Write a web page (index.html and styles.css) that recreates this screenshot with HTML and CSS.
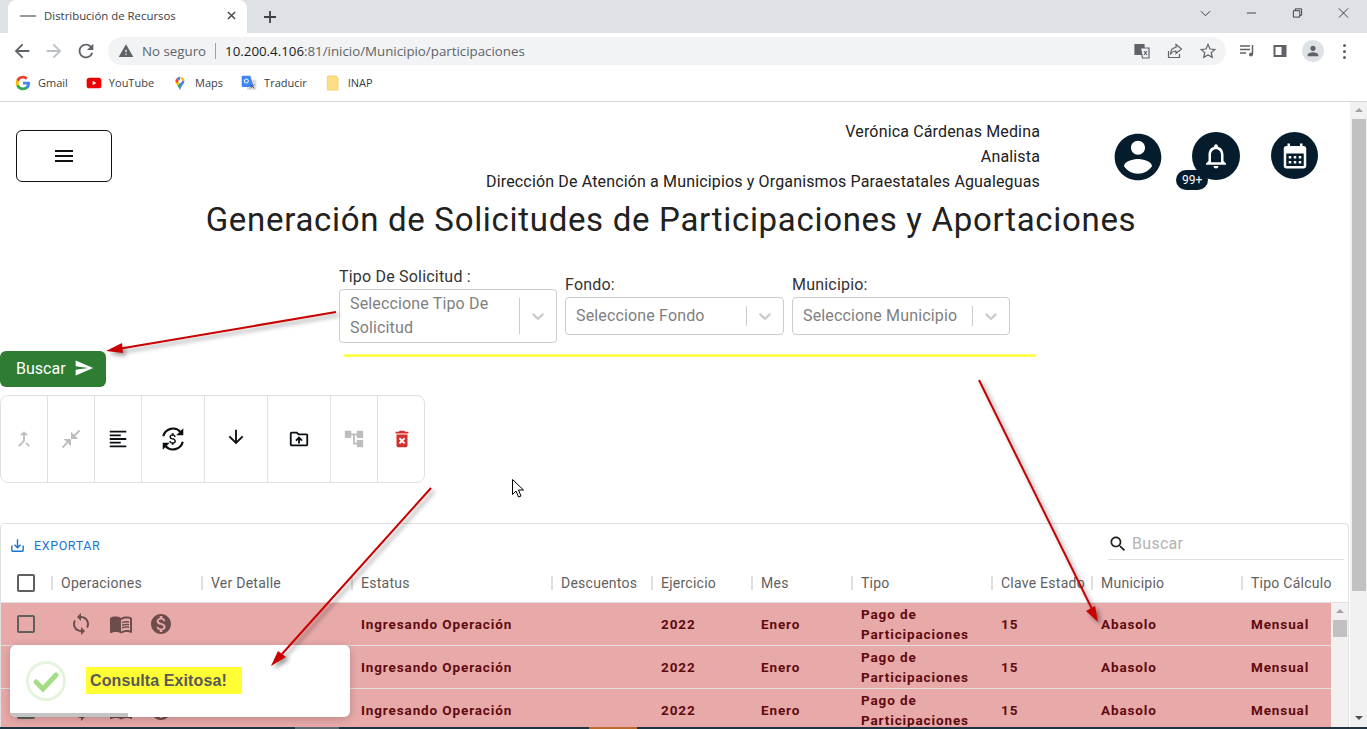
FILE: index.html
```html
<!DOCTYPE html>
<html lang="es">
<head>
    <meta charset="UTF-8">
    <title>Distribución de Recursos</title>
    <link rel="stylesheet" href="styles.css">
</head>
<body>
    <svg class="sprite" width="0" height="0">
        <symbol id="i-check" viewBox="0 0 24 24"><path d="M19 5v14H5V5h14m0-2H5c-1.1 0-2 .9-2 2v14c0 1.1.9 2 2 2h14c1.1 0 2-.9 2-2V5c0-1.1-.9-2-2-2z"/></symbol>
        <symbol id="i-sync" viewBox="0 0 24 24"><path d="M12 4V1L8 5l4 4V6c3.31 0 6 2.69 6 6 0 1.01-.25 1.97-.7 2.8l1.46 1.46C19.54 15.03 20 13.57 20 12c0-4.42-3.58-8-8-8zm0 14c-3.31 0-6-2.69-6-6 0-1.01.25-1.97.7-2.8L5.24 7.74C4.46 8.97 4 10.43 4 12c0 4.42 3.58 8 8 8v3l4-4-4-4v3z"/></symbol>
        <symbol id="i-book" viewBox="0 0 24 24"><path d="M21 5c-1.11-.35-2.33-.5-3.5-.5-1.95 0-4.05.4-5.5 1.5-1.45-1.1-3.55-1.5-5.5-1.5S2.45 4.9 1 6v14.65c0 .25.25.5.5.5.1 0 .15-.05.25-.05C3.1 20.45 5.05 20 6.5 20c1.95 0 4.05.4 5.5 1.5 1.35-.85 3.8-1.5 5.5-1.5 1.65 0 3.35.3 4.75 1.05.1.05.15.05.25.05.25 0 .5-.25.5-.5V6c-.6-.45-1.25-.75-2-1zm0 13.5c-1.1-.35-2.3-.5-3.5-.5-1.7 0-4.15.65-5.5 1.5V8c1.35-.85 3.8-1.5 5.5-1.5 1.2 0 2.4.15 3.5.5v11.5z"/><path d="M17.5 10.5c.88 0 1.73.09 2.5.26V9.24c-.79-.15-1.64-.24-2.5-.24-1.7 0-3.24.29-4.5.83v1.66c1.13-.64 2.7-.99 4.5-.99zM13 12.49v1.66c1.13-.64 2.7-.99 4.5-.99.88 0 1.73.09 2.5.26V11.9c-.79-.15-1.64-.24-2.5-.24-1.7 0-3.24.3-4.5.83zM17.5 14.33c-1.7 0-3.24.29-4.5.83v1.66c1.13-.64 2.7-.99 4.5-.99.88 0 1.73.09 2.5.26v-1.52c-.79-.16-1.64-.24-2.5-.24z"/></symbol>
        <symbol id="i-money" viewBox="0 0 24 24"><path d="M12 2C6.48 2 2 6.48 2 12s4.48 10 10 10 10-4.48 10-10S17.52 2 12 2zm1.41 16.09V20h-2.67v-1.93c-1.71-.36-3.16-1.46-3.27-3.4h1.96c.1 1.05.82 1.87 2.65 1.87 1.96 0 2.4-.98 2.4-1.59 0-.83-.44-1.61-2.67-2.14-2.48-.6-4.18-1.62-4.18-3.67 0-1.72 1.39-2.84 3.11-3.21V4h2.67v1.95c1.86.45 2.79 1.86 2.85 3.39H14.3c-.05-1.11-.64-1.87-2.22-1.87-1.5 0-2.4.68-2.4 1.64 0 .84.65 1.39 2.67 1.91s4.18 1.39 4.18 3.91c-.01 1.83-1.38 2.83-3.12 3.16z"/></symbol>
    </svg>

    <!-- ventana del navegador -->
    <div class="tabstrip">
        <div class="tab">
            <span class="tab-favicon"></span>
            <span class="tab-title">Distribución de Recursos</span>
            <svg class="tab-close" viewBox="0 0 10 10"><path d="M1 1l8 8M9 1l-8 8"/></svg>
        </div>
        <svg class="tab-new" viewBox="0 0 12 12"><path d="M6 0v12M0 6h12"/></svg>
        <div class="win-controls">
            <svg viewBox="0 0 12 12"><path d="M1 4l5 5 5-5"/></svg>
            <svg viewBox="0 0 12 12"><path d="M1 6h10"/></svg>
            <svg viewBox="0 0 12 12"><path d="M1.5 3.5h7v7h-7zM3.5 3.5v-2h7v7h-2"/></svg>
            <svg viewBox="0 0 12 12"><path d="M1 1l10 10M11 1L1 11"/></svg>
        </div>
    </div>

    <div class="navbar">
        <svg class="nav-icon" viewBox="0 0 24 24"><path d="M20 11H7.83l5.59-5.59L12 4l-8 8 8 8 1.41-1.41L7.83 13H20v-2z"/></svg>
        <svg class="nav-icon is-off" viewBox="0 0 24 24"><path d="M12 4l-1.41 1.41L16.17 11H4v2h12.17l-5.58 5.59L12 20l8-8z"/></svg>
        <svg class="nav-icon" viewBox="0 0 24 24"><path d="M17.65 6.35C16.2 4.9 14.21 4 12 4c-4.42 0-7.99 3.58-7.99 8s3.57 8 7.99 8c3.73 0 6.84-2.55 7.73-6h-2.08c-.82 2.33-3.04 4-5.65 4-3.31 0-6-2.69-6-6s2.69-6 6-6c1.66 0 3.14.69 4.22 1.78L13 11h7V4l-2.35 2.35z"/></svg>
        <div class="omnibox">
            <svg class="omni-warn" viewBox="0 0 24 24"><path d="M1 21h22L12 2 1 21zm12-3h-2v-2h2v2zm0-4h-2v-4h2v4z"/></svg>
            <span class="omni-status">No seguro</span>
            <span class="omni-url"><b>10.200.4.106</b>:81/inicio/Municipio/participaciones</span>
            <span class="omni-actions">
                <svg viewBox="0 0 16 16"><path class="fill" d="M1 1.500h9v10H1z"/><path class="page-sheet" d="M6.500 5h8.500v10H8.500z"/><path d="M10 8l3 4M13 8l-3 4"/></svg>
                <svg viewBox="0 0 16 16"><path d="M1.500 8v6.500h11V11M9 1.500l5.500 4.500L9 10.500V8C6 8 4.500 9.500 3.500 11.500 3.500 7.500 5.500 4.500 9 4.500z"/></svg>
                <svg viewBox="0 0 16 16"><path d="M8 1.500l2 4.500 4.800.4-3.600 3.200 1.100 4.700L8 11.900l-4.300 2.400 1.100-4.700L1.200 6.400 6 6z"/></svg>
            </span>
        </div>
        <div class="nav-right">
            <svg viewBox="0 0 16 16"><path d="M1 3h10M1 6.500h10M1 10h6M13.500 2v9"/><circle class="fill" cx="12" cy="11.500" r="2"/></svg>
            <svg viewBox="0 0 16 16"><path class="fill" d="M1.500 2h13v12h-13z"/><path class="cut" d="M3.500 4h6v8h-6z"/></svg>
            <span class="avatar"><svg viewBox="0 0 24 24"><path d="M12 12c2.210 0 4-1.790 4-4s-1.790-4-4-4-4 1.790-4 4 1.790 4 4 4zm0 2c-2.670 0-8 1.340-8 4v2h16v-2c0-2.660-5.330-4-8-4z"/></svg></span>
            <span class="kebab"><i></i><i></i><i></i></span>
        </div>
    </div>

    <div class="bookmarks">
        <span class="bookmark">
            <svg viewBox="0 0 24 24"><path fill="#4285f4" d="M22.500 12.200c0-.8-.1-1.500-.2-2.200H12v4.300h5.900c-.3 1.400-1 2.500-2.200 3.300v2.800h3.500c2.100-1.900 3.300-4.700 3.300-8.200z"/><path fill="#34a853" d="M12 23c3 0 5.400-1 7.200-2.600l-3.500-2.800c-1 .7-2.200 1.100-3.700 1.100-2.900 0-5.300-1.900-6.200-4.500H2.200v2.800C4 20.600 7.700 23 12 23z"/><path fill="#fbbc05" d="M5.800 14.200c-.5-1.400-.5-3 0-4.400V7H2.200c-1.500 3-1.500 7 0 10z"/><path fill="#ea4335" d="M12 5.400c1.600 0 3 .6 4.100 1.600l3.100-3.100C17.400 2.100 15 1 12 1 7.700 1 4 3.400 2.200 7l3.600 2.800C6.700 7.300 9.100 5.400 12 5.400z"/></svg>
            Gmail
        </span>
        <span class="bookmark">
            <svg viewBox="0 0 24 24"><rect fill="#e00" x="1" y="4" width="22" height="16" rx="4"/><path fill="#fff" d="M10 8.500l5.500 3.500-5.500 3.500z"/></svg>
            YouTube
        </span>
        <span class="bookmark">
            <svg viewBox="0 0 24 24"><path fill="#34a853" d="M12 23c-1-3-2.500-5-4-7l4-4z"/><path fill="#fbbc05" d="M8 16c-1-1.200-3-3.500-3-6.500l3.500-1 4 3.500z"/><path fill="#4285f4" d="M12 12l3.500-3.500 3-.5c.6 3-1.500 6-3 7.500-1.200 1.500-2.600 4-3.500 7.500 0 0 0-6 0-11z"/><path fill="#ea4335" d="M5 9.500C5 7.800 5.700 6.300 6.800 5.200L12 9l-3.500 3z"/><path fill="#4285f4" d="M6.800 5.200A7 7 0 0 1 12 2.500v6z"/><path fill="#fbbc05" d="M12 2.500c3 0 5.800 2 6.500 5.500l-3 1z"/><circle fill="#fff" cx="12" cy="9.500" r="2.500"/></svg>
            Maps
        </span>
        <span class="bookmark">
            <svg viewBox="0 0 24 24"><rect fill="#dadce0" x="9" y="7" width="14" height="15" rx="1"/><path fill="#4285f4" d="M3 1h11l5 17H3a2 2 0 0 1-2-2V3a2 2 0 0 1 2-2z"/><circle fill="none" stroke="#fff" stroke-width="1.500" cx="8" cy="9" r="3"/><path stroke="#555" stroke-width="1.500" d="M14 14l6 6M20 14l-6 6"/></svg>
            Traducir
        </span>
        <span class="bookmark">
            <svg viewBox="0 0 24 24"><path fill="#fdde85" stroke="#f2c744" d="M3.500 1.500h13l3 3v18h-16z"/></svg>
            INAP
        </span>
    </div>

    <div class="viewport">
        <main class="page">
            <header class="page-head">
                <button class="menu-btn">
                    <svg viewBox="0 0 24 24"><path d="M3 18h18v-2H3v2zm0-5h18v-2H3v2zm0-7v2h18V6H3z"/></svg>
                </button>
                <div class="user-info">
                    <div>Verónica Cárdenas Medina</div>
                    <div>Analista</div>
                    <div>Dirección De Atención a Municipios y Organismos Paraestatales Agualeguas</div>
                </div>
                <div class="user-actions">
                    <svg class="round-user" viewBox="0 0 24 24"><path d="M12 2C6.480 2 2 6.480 2 12s4.480 10 10 10 10-4.480 10-10S17.520 2 12 2zm0 3c1.660 0 3 1.340 3 3s-1.340 3-3 3-3-1.340-3-3 1.340-3 3-3zm0 14.200c-2.500 0-4.710-1.280-6-3.220.030-1.990 4-3.080 6-3.080 1.990 0 5.970 1.090 6 3.080-1.290 1.940-3.500 3.220-6 3.220z"/></svg>
                    <span class="round-btn round-bell">
                        <svg viewBox="0 0 24 24"><path d="M12 22c1.100 0 2-.9 2-2h-4c0 1.100.9 2 2 2zm6-6v-5c0-3.070-1.630-5.640-4.500-6.320V4c0-.83-.67-1.500-1.500-1.500s-1.500.67-1.500 1.500v.68C7.640 5.360 6 7.920 6 11v5l-2 2v1h16v-1l-2-2zm-2 1H8v-6c0-2.480 1.510-4.500 4-4.500s4 2.020 4 4.500v6z"/></svg>
                        <span class="badge">99+</span>
                    </span>
                    <span class="round-btn">
                        <svg viewBox="0 0 24 24"><path d="M19 4h-1V2h-2v2H8V2H6v2H5c-1.110 0-1.990.9-1.990 2L3 20c0 1.100.89 2 2 2h14c1.100 0 2-.9 2-2V6c0-1.100-.9-2-2-2zm0 16H5V10h14v10zM9 14H7v-2h2v2zm4 0h-2v-2h2v2zm4 0h-2v-2h2v2zm-8 4H7v-2h2v2zm4 0h-2v-2h2v2zm4 0h-2v-2h2v2z"/></svg>
                    </span>
                </div>
            </header>

            <h1 class="page-title">Generación de Solicitudes de Participaciones y Aportaciones</h1>

            <section class="filters">
                <div class="field field-tipo">
                    <label>Tipo De Solicitud :</label>
                    <div class="select">
                        <span class="select-value">Seleccione Tipo De Solicitud</span>
                        <span class="select-sep"></span>
                        <svg class="select-arrow" viewBox="0 0 20 20"><path d="M4.516 7.548c.436-.446 1.043-.481 1.576 0L10 11.295l3.908-3.747c.533-.481 1.141-.446 1.574 0 .436.445.408 1.197 0 1.615-.406.418-4.695 4.502-4.695 4.502a1.095 1.095 0 0 1-1.576 0S4.924 9.581 4.516 9.163c-.409-.418-.436-1.170 0-1.615z"/></svg>
                    </div>
                </div>
                <div class="field">
                    <label>Fondo:</label>
                    <div class="select">
                        <span class="select-value">Seleccione Fondo</span>
                        <span class="select-sep"></span>
                        <svg class="select-arrow" viewBox="0 0 20 20"><path d="M4.516 7.548c.436-.446 1.043-.481 1.576 0L10 11.295l3.908-3.747c.533-.481 1.141-.446 1.574 0 .436.445.408 1.197 0 1.615-.406.418-4.695 4.502-4.695 4.502a1.095 1.095 0 0 1-1.576 0S4.924 9.581 4.516 9.163c-.409-.418-.436-1.170 0-1.615z"/></svg>
                    </div>
                </div>
                <div class="field field-tipo">
                    <label>Municipio:</label>
                    <div class="select">
                        <span class="select-value">Seleccione Municipio</span>
                        <span class="select-sep"></span>
                        <svg class="select-arrow" viewBox="0 0 20 20"><path d="M4.516 7.548c.436-.446 1.043-.481 1.576 0L10 11.295l3.908-3.747c.533-.481 1.141-.446 1.574 0 .436.445.408 1.197 0 1.615-.406.418-4.695 4.502-4.695 4.502a1.095 1.095 0 0 1-1.576 0S4.924 9.581 4.516 9.163c-.409-.418-.436-1.170 0-1.615z"/></svg>
                    </div>
                </div>
            </section>

            <button class="search-btn">
                Buscar
                <svg viewBox="0 0 24 24"><path d="M2.010 21L23 12 2.010 3 2 10l15 2-15 2z"/></svg>
            </button>

            <div class="tools">
                <span class="tool w47 is-off"><svg viewBox="0 0 24 24"><path d="M17 20.410L18.410 19 15 15.590 13.590 17 17 20.410zM7.500 8H11v5.590L5.590 19 7 20.410l6-6V8h3.500L12 3.500 7.500 8z"/></svg></span>
                <span class="tool w47 is-off"><svg viewBox="0 0 24 24"><path d="M22 3.410l-5.290 5.290L20 12h-8V4l3.290 3.290L20.590 2 22 3.410zM3.410 22l5.290-5.290L12 20v-8H4l3.290 3.290L2 20.590 3.410 22z"/></svg></span>
                <span class="tool w47"><svg viewBox="0 0 24 24"><path d="M15 15H3v2h12v-2zm0-8H3v2h12V7zM3 13h18v-2H3v2zm0 8h18v-2H3v2zM3 3v2h18V3H3z"/></svg></span>
                <span class="tool w63 is-big"><svg viewBox="0 0 24 24"><path class="ring" d="M3 9.500A9.300 9.300 0 0 1 19 5.500M21 14.500A9.300 9.300 0 0 1 5 18.500"/><path d="M21.500 2v6.500h-6.500zM2.500 22v-6.500h6.500z"/><path transform="translate(4.800 4.800) scale(.6)" d="M11.800 10.900c-2.270-.59-3-1.200-3-2.150 0-1.090 1.010-1.850 2.700-1.850 1.780 0 2.440.85 2.500 2.100h2.210c-.07-1.720-1.120-3.300-3.210-3.810V3h-3v2.160c-1.940.42-3.500 1.680-3.500 3.610 0 2.310 1.910 3.460 4.700 4.130 2.500.6 3 1.480 3 2.410 0 .69-.49 1.790-2.700 1.790-2.060 0-2.870-.92-2.980-2.100h-2.200c.12 2.190 1.760 3.420 3.680 3.830V21h3v-2.150c1.950-.37 3.500-1.500 3.500-3.550 0-2.840-2.430-3.810-4.700-4.400z"/></svg></span>
                <span class="tool w63 is-up"><svg viewBox="0 0 24 24"><path d="M20 12l-1.410-1.410L13 16.170V4h-2v12.170l-5.580-5.590L4 12l8 8 8-8z"/></svg></span>
                <span class="tool w63"><svg viewBox="0 0 24 24"><path d="M20 6h-8l-2-2H4c-1.100 0-1.990.9-1.990 2L2 18c0 1.100.9 2 2 2h16c1.100 0 2-.9 2-2V8c0-1.100-.9-2-2-2zm0 12H4V6h5.170l2 2H20v10zM9.410 14.420L11 12.840V17h2v-4.160l1.590 1.590L16 13.010 12.010 9 8 13.010l1.410 1.410z"/></svg></span>
                <span class="tool w47 is-off"><svg viewBox="0 0 24 24"><path d="M22 11V3h-7v3H9V3H2v8h7V8h2v10h4v3h7v-8h-7v3h-2V8h2v3z"/></svg></span>
                <span class="tool w47 is-danger"><svg viewBox="0 0 24 24"><path d="M6 19c0 1.100.9 2 2 2h8c1.100 0 2-.9 2-2V7H6v12zm2.460-7.120l1.410-1.410L12 12.590l2.120-2.120 1.410 1.410L13.410 14l2.120 2.120-1.410 1.410L12 15.410l-2.120 2.120-1.410-1.410L10.590 14l-2.130-2.120zM15.500 4l-1-1h-5l-1 1H5v2h14V4z"/></svg></span>
            </div>

            <section class="table-card">
                <div class="table-tools">
                    <span class="export">
                        <svg viewBox="0 0 24 24"><path d="M19 12v7H5v-7H3v7c0 1.100.9 2 2 2h14c1.100 0 2-.9 2-2v-7h-2zm-6 .67l2.590-2.580L17 11.500l-5 5-5-5 1.410-1.410L11 12.670V3h2z"/></svg>
                        EXPORTAR
                    </span>
                    <span class="table-search">
                        <svg viewBox="0 0 24 24"><path d="M15.500 14h-.79l-.28-.27C15.410 12.590 16 11.110 16 9.500 16 5.910 13.090 3 9.500 3S3 5.910 3 9.500 5.910 16 9.500 16c1.610 0 3.090-.59 4.230-1.570l.27.28v.79l5 4.990L20.490 19l-4.990-5zm-6 0C7.010 14 5 11.990 5 9.500S7.010 5 9.500 5 14 7.010 14 9.500 11.990 14 9.500 14z"/></svg>
                        Buscar
                    </span>
                </div>
                <div class="grid-row grid-head">
                    <span class="cell-check"><svg class="check"><use href="#i-check"/></svg></span>
                    <span class="th">Operaciones</span>
                    <span class="th">Ver Detalle</span>
                    <span class="th">Estatus</span>
                    <span class="th">Descuentos</span>
                    <span class="th">Ejercicio</span>
                    <span class="th">Mes</span>
                    <span class="th">Tipo</span>
                    <span class="th">Clave Estado</span>
                    <span class="th">Municipio</span>
                    <span class="th">Tipo Cálculo</span>
                </div>
                <div class="grid-body">
                    <div class="grid-rows">
                        <div class="grid-row data-row">
                            <span class="cell-check"><svg class="check"><use href="#i-check"/></svg></span>
                            <span class="ops"><svg><use href="#i-sync"/></svg><svg><use href="#i-book"/></svg><svg><use href="#i-money"/></svg></span>
                            <span></span>
                            <span class="td">Ingresando Operación</span>
                            <span></span>
                            <span class="td">2022</span>
                            <span class="td">Enero</span>
                            <span class="td">Pago de Participaciones</span>
                            <span class="td">15</span>
                            <span class="td">Abasolo</span>
                            <span class="td">Mensual</span>
                        </div>
                        <div class="grid-row data-row">
                            <span class="cell-check"><svg class="check"><use href="#i-check"/></svg></span>
                            <span class="ops"><svg><use href="#i-sync"/></svg><svg><use href="#i-book"/></svg><svg><use href="#i-money"/></svg></span>
                            <span></span>
                            <span class="td">Ingresando Operación</span>
                            <span></span>
                            <span class="td">2022</span>
                            <span class="td">Enero</span>
                            <span class="td">Pago de Participaciones</span>
                            <span class="td">15</span>
                            <span class="td">Abasolo</span>
                            <span class="td">Mensual</span>
                        </div>
                        <div class="grid-row data-row">
                            <span class="cell-check"><svg class="check"><use href="#i-check"/></svg></span>
                            <span class="ops"><svg><use href="#i-sync"/></svg><svg><use href="#i-book"/></svg><svg><use href="#i-money"/></svg></span>
                            <span></span>
                            <span class="td">Ingresando Operación</span>
                            <span></span>
                            <span class="td">2022</span>
                            <span class="td">Enero</span>
                            <span class="td">Pago de Participaciones</span>
                            <span class="td">15</span>
                            <span class="td">Abasolo</span>
                            <span class="td">Mensual</span>
                        </div>
                    </div>
                    <div class="table-scroll">
                        <i class="up"></i>
                        <b></b>
                    </div>
                </div>
            </section>
        </main>
        <div class="page-scroll">
            <i class="up"></i>
            <b></b>
            <i class="down"></i>
        </div>
    </div>
    <div class="taskbar">
        <span class="task-grey"></span>
        <span class="task-orange"></span>
    </div>

    <!-- aviso -->
    <div class="toast">
        <svg class="toast-icon" viewBox="0 0 40 40"><circle cx="20" cy="20" r="18.500"/><path d="M10 21l7 7 13-14"/></svg>
        <span class="toast-text">Consulta Exitosa!</span>
        <span class="toast-bar"></span>
    </div>

    <!-- anotaciones sobre la captura -->
    <svg class="notes" viewBox="0 0 1367 729">
        <path class="note-yellow" d="M344 355.500H1036"/>
        <g class="note-arrow">
            <path d="M336 312L118 349"/>
            <path class="head" d="M106 351l16-8 1 10z"/>
            <path d="M979 380L1092 609"/>
            <path class="head" d="M1098 622l-12-11 9-5z"/>
            <path d="M431 488L282 654"/>
            <path class="head" d="M271 666l7-15 8 6z"/>
        </g>
        <path class="cursor" d="M512.500 479.500v15l3.500-3.500 2.500 6 2.500-1-2.500-6h5z"/>
    </svg>
</body>
</html>
```
FILE: styles.css
```css
* {
    box-sizing: border-box;
}

html,
body {
    height: 100%;
}

body {
    margin: 0;
    display: flex;
    flex-direction: column;
    overflow: hidden;
    position: relative;
    background-color: #fff;
    color: #212121;
    font-family: "Roboto", "Liberation Sans", sans-serif;
}

.sprite {
    position: absolute;
}

/* navegador */

.tabstrip {
    display: flex;
    align-items: flex-end;
    flex: 0 0 33px;
    background-color: #dee1e6;
}

.tab {
    display: flex;
    align-items: center;
    width: 239px;
    height: 33px;
    margin-left: 8px;
    padding: 0 11px 2px 12px;
    border-radius: 8px 8px 0 0;
    background-color: #fff;
}

.tab-favicon {
    width: 16px;
    height: 2px;
    margin-right: 8px;
    background-color: #999;
}

.tab-title {
    flex: 1;
    font-family: "Open Sans", sans-serif;
    font-size: 11.400px;
    color: #3c4043;
}

.tab-close {
    width: 9px;
    height: 9px;
    fill: none;
    stroke: #45484c;
    stroke-width: 1.600;
}

.tab-new {
    align-self: center;
    width: 12px;
    height: 12px;
    margin-left: 17px;
    fill: none;
    stroke: #3c4043;
    stroke-width: 1.800;
}

.win-controls {
    display: flex;
    align-self: flex-start;
    gap: 35px;
    margin-left: auto;
    padding: 7px 18px 0 0;
}

.win-controls svg {
    width: 11px;
    height: 12px;
    fill: none;
    stroke: #333;
    stroke-width: 1;
}

.navbar {
    display: flex;
    align-items: center;
    flex: 0 0 33px;
    padding: 3px 0 0 11px;
    background-color: #fff;
}

.nav-icon {
    width: 22px;
    height: 22px;
    margin-right: 10px;
    fill: #5f6368;
}

.nav-icon.is-off {
    fill: #bdc1c6;
}

.omnibox {
    display: flex;
    align-items: center;
    width: 1118px;
    height: 28px;
    margin-left: 1px;
    padding: 0 10px;
    border-radius: 14px;
    background-color: #f1f3f4;
    font-family: "Open Sans", sans-serif;
    font-size: 13.300px;
    color: #5f6368;
}

.omni-warn {
    width: 16px;
    height: 16px;
    margin-right: 8px;
    fill: #5f6368;
}

.omni-status {
    padding-right: 9px;
    border-right: 1px solid #9aa0a6;
    line-height: 16px;
}

.omni-url {
    padding-left: 9px;
}

.omni-url b {
    font-weight: 400;
    color: #202124;
}

.omni-actions {
    display: flex;
    gap: 17px;
    margin-left: auto;
}

.omni-actions svg {
    width: 16px;
    height: 16px;
    fill: none;
    stroke: #5f6368;
    stroke-width: 1.200;
}

.omni-actions .fill {
    fill: #5f6368;
}

.omni-actions .page-sheet {
    fill: #f1f3f4;
}

.nav-right {
    display: flex;
    align-items: center;
    gap: 17px;
    margin-left: 13px;
}

.nav-right > svg {
    width: 16px;
    height: 16px;
    fill: none;
    stroke: #5f6368;
    stroke-width: 1.500;
}

.nav-right .fill {
    fill: #5f6368;
    stroke: none;
}

.nav-right .cut {
    fill: #fff;
    stroke: none;
}

.avatar {
    display: flex;
    align-items: center;
    justify-content: center;
    width: 22px;
    height: 22px;
    margin: 0 -3px;
    border-radius: 50%;
    background-color: #dee1e6;
}

.avatar svg {
    width: 16px;
    height: 16px;
    fill: #5f6368;
}

.kebab {
    display: flex;
    flex-direction: column;
    gap: 3px;
    margin-left: 5px;
}

.kebab i {
    width: 3px;
    height: 3px;
    border-radius: 50%;
    background-color: #5f6368;
}

.bookmarks {
    display: flex;
    align-items: center;
    gap: 18px;
    flex: 0 0 36px;
    padding: 0 0 2px 15px;
    border-bottom: 1px solid #d8d8d8;
    font-family: "Open Sans", sans-serif;
    font-size: 11px;
    color: #3c4043;
}

.bookmark {
    display: flex;
    align-items: center;
    gap: 7px;
}

.bookmark svg {
    width: 16px;
    height: 16px;
}

.taskbar {
    display: flex;
    flex: 0 0 2px;
    background-color: #1f3340;
}

.task-grey {
    width: 44px;
    margin-left: 295px;
    background-color: #5c6870;
}

.task-orange {
    width: 48px;
    margin-left: 250px;
    background-color: #b96a2c;
}

/* pagina */

.viewport {
    display: flex;
    flex: 1;
    min-height: 0;
    overflow: hidden;
}

.page {
    flex: 0 0 1350px;
    min-width: 0;
}

.page-scroll {
    flex: 1;
    display: flex;
    flex-direction: column;
    align-items: center;
    background-color: #f1f1f1;
}

.page-scroll b {
    width: 14px;
    height: 472px;
    margin-top: 7px;
    background-color: #c1c1c1;
}

.up,
.down {
    width: 0;
    height: 0;
    border-left: 4px solid transparent;
    border-right: 4px solid transparent;
}

.up {
    margin-top: 6px;
    border-bottom: 4px solid #a3a3a3;
}

.down {
    margin-top: auto;
    margin-bottom: 7px;
    border-top: 4px solid #505050;
}

.page-head {
    display: flex;
    align-items: flex-start;
    height: 98px;
    padding-top: 17px;
}

.menu-btn {
    display: flex;
    align-items: center;
    justify-content: center;
    width: 96px;
    height: 52px;
    margin: 11px 0 0 16px;
    border: 1px solid #111;
    border-radius: 6px;
    background-color: #fff;
}

.menu-btn svg {
    width: 24px;
    height: 24px;
    fill: #111;
}

.user-info {
    width: 928px;
    font-size: 16px;
    line-height: 25px;
    letter-spacing: .15px;
    text-align: right;
}

.user-actions {
    display: flex;
    align-items: flex-start;
    margin: 11px 0 0 70px;
}

.round-user {
    width: 56px;
    height: 56px;
    margin-top: -1px;
    fill: #041c2c;
}

.round-btn {
    display: flex;
    align-items: center;
    justify-content: center;
    position: relative;
    width: 47px;
    height: 47px;
    margin-top: 2px;
    border-radius: 50%;
    background-color: #041c2c;
}

.round-bell {
    width: 48px;
    height: 48px;
    margin: 2px 31px 0 26px;
}

.round-btn svg {
    width: 30px;
    height: 30px;
    fill: #fff;
}

.badge {
    position: absolute;
    left: -16px;
    bottom: -10px;
    padding: 0 6px;
    border-radius: 10px;
    background-color: #041c2c;
    color: #fff;
    font-size: 12px;
    line-height: 20px;
}

.page-title {
    margin: 0;
    padding-right: 8px;
    font-size: 33px;
    font-weight: 400;
    line-height: 40px;
    letter-spacing: .69px;
    text-align: center;
    color: #212121;
}

.filters {
    display: flex;
    align-items: center;
    gap: 8px;
    margin: 27px 0 0 339px;
}

.field label {
    display: block;
    margin-bottom: 3px;
    font-size: 16px;
    line-height: 19px;
    letter-spacing: .2px;
    color: #333;
}

.field {
    width: 219px;
}

.field-tipo {
    width: 218px;
}

.select {
    display: flex;
    align-items: center;
    min-height: 38px;
    padding: 2px 0 2px 10px;
    border: 1px solid #ccc;
    border-radius: 4px;
    background-color: #fff;
}

.select-value {
    flex: 1;
    font-size: 16px;
    line-height: 24px;
    letter-spacing: .15px;
    color: #808080;
}

.select-sep {
    align-self: stretch;
    width: 1px;
    margin: 6px 0;
    background-color: #ccc;
}

.select-arrow {
    width: 20px;
    height: 20px;
    margin: 0 8px;
    fill: #ccc;
}

.search-btn {
    display: flex;
    align-items: center;
    gap: 8px;
    width: 106px;
    height: 36px;
    margin-top: 8px;
    padding: 0 0 2px 16px;
    border: 0;
    border-radius: 6px;
    background-color: #2e7d32;
    color: #fff;
    font-family: inherit;
    font-size: 16px;
}

.search-btn svg {
    width: 20px;
    height: 20px;
    fill: #fff;
}

.tools {
    display: flex;
    width: 425px;
    height: 88px;
    margin-top: 8px;
    border: 1px solid #e0e0e0;
    border-radius: 8px;
}

.tool {
    display: flex;
    justify-content: center;
    align-items: flex-start;
    flex: none;
    padding-top: 32px;
    border-right: 1px solid #e0e0e0;
}

.tool:last-child {
    border-right: 0;
}

.tool svg {
    width: 22px;
    height: 22px;
    fill: #0b0f12;
}

.tool.is-up {
    padding-top: 30px;
}

.tool.is-big {
    padding-top: 30px;
}

.tool.is-big svg {
    width: 26px;
    height: 26px;
}

.tool.is-off svg {
    fill: #bdbdbd;
}

.tool.is-danger svg {
    fill: #d32f2f;
}

.w47 {
    width: 47px;
}

.w63 {
    width: 63px;
}

.tool .ring {
    fill: none;
    stroke: #0b0f12;
    stroke-width: 2;
}

.table-card {
    width: 1349px;
    margin-top: 40px;
    border: 1px solid #e0e0e0;
    border-radius: 4px 4px 0 0;
}

.table-tools {
    display: flex;
    justify-content: space-between;
    height: 40px;
    padding: 7px 4px 0 8px;
}

.export {
    display: flex;
    align-items: center;
    gap: 8px;
    height: 26px;
    margin-top: 1px;
    font-size: 12.500px;
    letter-spacing: .6px;
    color: #1976d2;
}

.export svg {
    width: 17px;
    height: 17px;
    fill: #1976d2;
}

.table-search {
    display: flex;
    align-items: center;
    gap: 4px;
    width: 236px;
    height: 29px;
    padding-bottom: 3px;
    border-bottom: 1px solid #e0e0e0;
    font-size: 16px;
    letter-spacing: .3px;
    color: #b3b3b3;
}

.table-search svg {
    width: 20px;
    height: 20px;
    fill: #212121;
}

.grid-row {
    display: grid;
    grid-template-columns: 50px 150px 150px 200px 100px 100px 100px 140px 100px 150px 90px;
    align-items: center;
}

.grid-head {
    height: 39px;
    padding-bottom: 1px;
    border-bottom: 1px solid #e0e0e0;
}

.cell-check {
    display: flex;
    justify-content: center;
}

.check {
    width: 24px;
    height: 24px;
    fill: #5f5f5f;
}

.th {
    padding-left: 8px;
    border-left: 2px solid #e0e0e0;
    font-size: 14px;
    line-height: 14px;
    letter-spacing: .25px;
    color: #5f5f5f;
    white-space: nowrap;
}

.grid-body {
    display: flex;
}

.grid-rows {
    flex: 0 0 1330px;
}

.data-row {
    height: 43px;
    overflow: hidden;
    border-bottom: 1px solid #e0e0e0;
    background-color: #e8a9a9;
}

.td {
    padding-left: 10px;
    font-size: 13.500px;
    font-weight: 700;
    line-height: 20px;
    letter-spacing: .88px;
    color: #5f0a0f;
}

.ops {
    display: flex;
    align-items: center;
    gap: 16px;
    padding-left: 18px;
}

.ops svg {
    width: 24px;
    height: 24px;
    fill: #6d4c4c;
}

.table-scroll {
    flex: 1;
    display: flex;
    flex-direction: column;
    align-items: center;
    background-color: #f1f1f1;
}

.table-scroll b {
    width: 14px;
    height: 17px;
    margin-top: 7px;
    background-color: #c1c1c1;
}

/* aviso */

.toast {
    position: absolute;
    left: 10px;
    top: 645px;
    display: flex;
    align-items: center;
    width: 340px;
    height: 72px;
    padding: 0 0 1px 16px;
    overflow: hidden;
    border-radius: 6px;
    background-color: #fff;
    box-shadow: 0 2px 8px rgba(0, 0, 0, .2);
}

.toast-icon {
    width: 40px;
    height: 40px;
    fill: none;
}

.toast-icon circle {
    stroke: #e5f4dd;
    stroke-width: 3;
}

.toast-icon path {
    stroke: #a5dc86;
    stroke-width: 5;
    stroke-linecap: round;
}

.toast-text {
    margin-left: 20px;
    padding: 3px 15px 3px 4px;
    background-color: #ffff33;
    font-family: "Liberation Sans", sans-serif;
    font-size: 16px;
    font-weight: 700;
    line-height: 21px;
    letter-spacing: .1px;
    color: #595959;
}

.toast-bar {
    position: absolute;
    left: 0;
    bottom: 0;
    width: 118px;
    height: 4px;
    background-color: #c4c4c4;
}

/* anotaciones */

.notes {
    position: absolute;
    left: 0;
    top: 0;
    width: 1367px;
    height: 729px;
    pointer-events: none;
}

.note-yellow {
    fill: none;
    stroke: #ffff33;
    stroke-width: 2.500;
}

.note-arrow {
    filter: drop-shadow(3px 3px 2px rgba(0, 0, 0, .4));
    stroke: #c80000;
    stroke-width: 2;
    fill: none;
}

.note-arrow .head {
    fill: #c80000;
    stroke: none;
}

.cursor {
    fill: #fff;
    stroke: #000;
    stroke-width: 1;
}
```
